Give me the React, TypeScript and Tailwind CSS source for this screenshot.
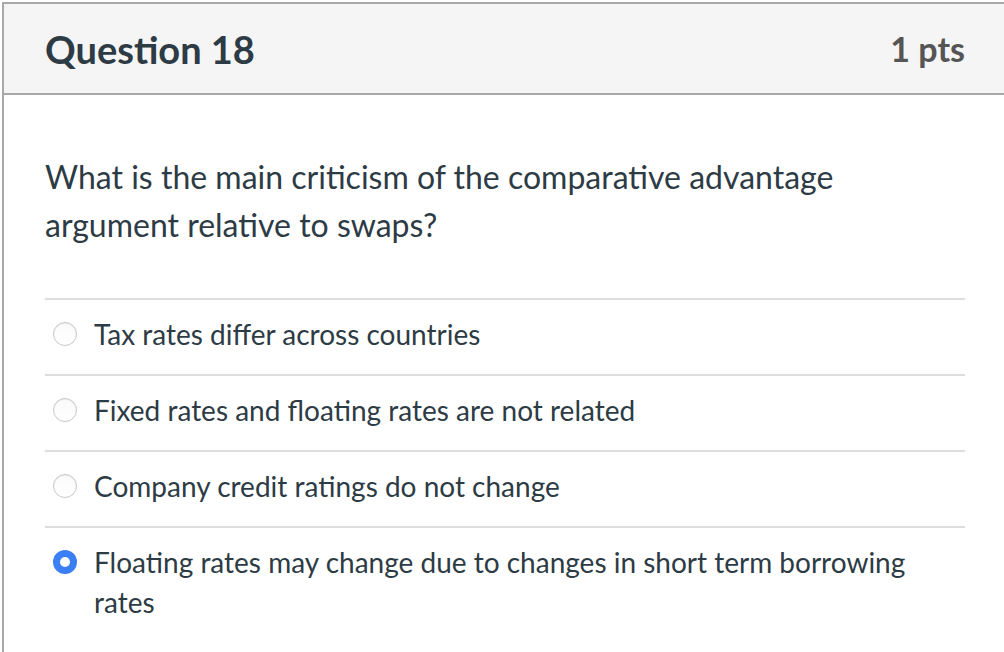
import React from "react";

const answers = [
  { text: "Tax rates differ across countries", checked: false },
  { text: "Fixed rates and floating rates are not related", checked: false },
  { text: "Company credit ratings do not change", checked: false },
  { text: "Floating rates may change due to changes in short term borrowing rates", checked: true },
];

function Radio({ checked }: { checked: boolean }) {
  if (checked) {
    return (
      <div className="w-[24px] h-[24px] rounded-full bg-[#3b7ff5] flex items-center justify-center shrink-0">
        <div className="w-[10px] h-[10px] rounded-full bg-white" />
      </div>
    );
  }
  return (
    <div className="w-[24px] h-[24px] rounded-full border border-[#c7c7c7] bg-gradient-to-b from-[#fafafa] to-white shadow-[inset_0_1px_1px_rgba(0,0,0,0.06)] shrink-0" />
  );
}

export default function App() {
  return (
    <div className="w-[1004px] h-[652px] bg-white overflow-hidden pt-[2px] pl-[2px]" style={{ fontFamily: "Lato, 'Noto Sans', sans-serif" }}>
      <div className="border-l-2 border-t-2 border-[#a8a8a8] h-[700px]">
        <div className="h-[91px] bg-[#f5f5f5] border-b-2 border-[#a8a8a8] flex items-center justify-between pl-[41px] pr-[39px]">
          <div className="text-[38px] font-bold text-[#2d3b45] leading-none">Question 18</div>
          <div className="text-[34px] font-bold text-[#555555] leading-none">1 pts</div>
        </div>
        <div className="pl-[41px] pr-[39px]">
          <div className="pt-[58px] pb-[49px] text-[32px] leading-[48px] text-[#2d3b45]">
            What is the main criticism of the comparative advantage
            <br />
            argument relative to swaps?
          </div>
          {answers.map((a, i) => (
            <div key={i} className="border-t-2 border-[#dddddd] pt-[14px] pb-[20px] flex items-start">
              <div className="w-[50px] pl-[8px] h-[40px] flex items-center shrink-0">
                <Radio checked={a.checked} />
              </div>
              <div className="text-[28px] leading-[40px] text-[#2d3b45] -ml-[1px]">{a.text}</div>
            </div>
          ))}
        </div>
      </div>
    </div>
  );
}
